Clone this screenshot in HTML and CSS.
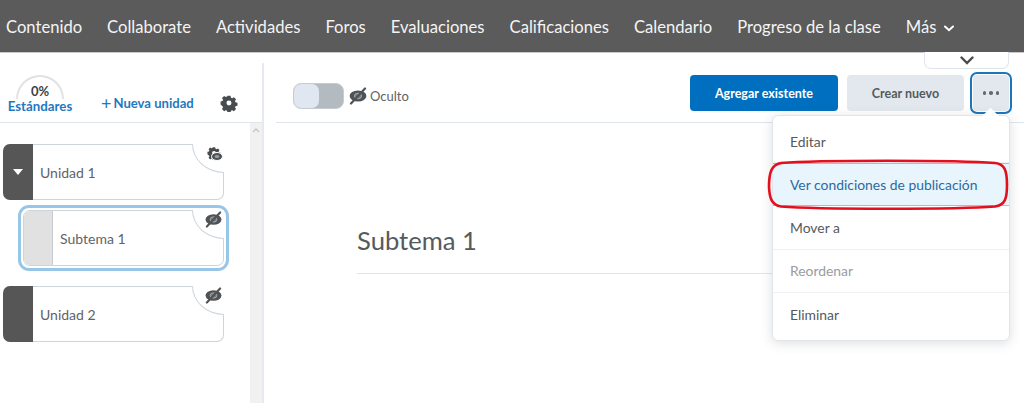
FILE: index.html
```html
<!DOCTYPE html>
<html lang="es">
<head>
    <meta charset="UTF-8">
    <title>Contenido</title>
    <link rel="stylesheet" href="styles.css">
</head>
<body>
    <svg class="defs" width="0" height="0">
        <symbol id="eye-off" viewBox="0 0 18 18">
            <ellipse cx="9" cy="9" rx="8.4" ry="5.6" fill="#4f5355"/>
            <ellipse cx="9" cy="9" rx="3.6" ry="2.8" fill="#77797b" stroke="#b5b7b9" stroke-width=".8"/>
            <path d="M2 16.5 L16 1.5" stroke="#4f5355" stroke-width="2.2" stroke-linecap="round"/>
        </symbol>
        <symbol id="gear" viewBox="0 0 18 18">
            <path fill="#494c4e" fill-rule="evenodd" d="M7.3 0.8h3.4l.5 2.2 1.4.6 1.9-1.2 2.4 2.4-1.2 1.9.6 1.4 2.2.5v3.4l-2.2.5-.6 1.4 1.2 1.9-2.4 2.4-1.9-1.2-1.4.6-.5 2.2H7.3l-.5-2.2-1.4-.6-1.9 1.2-2.4-2.4 1.2-1.9-.6-1.4L-.5 10.7V7.3l2.2-.5.6-1.4L1.1 3.5l2.4-2.4 1.9 1.2 1.4-.6zM9 6.2a2.8 2.8 0 1 0 0 5.6 2.8 2.8 0 0 0 0-5.6z" transform="translate(1 1) scale(.89)"/>
        </symbol>
    </svg>

    <nav class="topnav">
        <a>Contenido</a>
        <a>Collaborate</a>
        <a>Actividades</a>
        <a>Foros</a>
        <a>Evaluaciones</a>
        <a>Calificaciones</a>
        <a>Calendario</a>
        <a>Progreso de la clase</a>
        <a class="more">Más
            <svg width="10" height="7" viewBox="0 0 10 7"><path d="M1 1.5 L5 5.2 L9 1.5" fill="none" stroke="#fff" stroke-width="2" stroke-linecap="round"/></svg>
        </a>
    </nav>

    <div class="layout">
        <aside class="sidebar">
            <div class="side-head">
                <div class="standards">
                    <div class="gauge">0%</div>
                    <div class="standards-label">Estándares</div>
                </div>
                <a class="new-unit"><span class="plus">+</span>Nueva unidad</a>
                <svg class="side-gear" width="18" height="18"><use href="#gear"/></svg>
            </div>
            <div class="side-body">
                <div class="tree">
                    <div class="card">
                        <div class="card-tab">
                            <svg width="10" height="6" viewBox="0 0 10 6"><path d="M0 0H10L5 6Z" fill="#fff"/></svg>
                        </div>
                        <div class="card-name">Unidad 1</div>
                        <div class="notch"></div>
                        <svg class="card-icon card-icon-gear" width="14" height="14"><use href="#gear"/></svg>
                        <svg class="card-icon-sub" width="12" height="9" viewBox="0 0 12 9"><ellipse cx="6" cy="4.5" rx="5.5" ry="4" fill="#4f5355" stroke="#fff" stroke-width="1"/><ellipse cx="6" cy="4.5" rx="2.4" ry="1.6" fill="#9a9c9e"/></svg>
                    </div>
                    <div class="card-focus">
                        <div class="card card-sub">
                            <div class="card-tab tab-light"></div>
                            <div class="card-name">Subtema 1</div>
                            <div class="notch"></div>
                            <svg class="card-icon" width="17" height="17"><use href="#eye-off"/></svg>
                        </div>
                    </div>
                    <div class="card">
                        <div class="card-tab"></div>
                        <div class="card-name">Unidad 2</div>
                        <div class="notch"></div>
                        <svg class="card-icon" width="17" height="17"><use href="#eye-off"/></svg>
                    </div>
                </div>
                <div class="scrollbar">
                    <svg width="8" height="5" viewBox="0 0 8 5"><path d="M1 4 L4 1 L7 4" fill="none" stroke="#c4c4c4" stroke-width="1.4"/></svg>
                </div>
            </div>
        </aside>

        <main class="content">
            <div class="toolbar">
                <div class="visibility">
                    <div class="toggle"><div class="knob"></div></div>
                    <svg width="18" height="18"><use href="#eye-off"/></svg>
                    <span>Oculto</span>
                </div>
                <div class="actions">
                    <button class="btn btn-primary">Agregar existente</button>
                    <button class="btn btn-secondary">Crear nuevo</button>
                    <button class="btn-dots"><i></i><i></i><i></i></button>
                </div>
            </div>
            <h1 class="title">Subtema 1</h1>
        </main>
    </div>

    <div class="collapse-tab">
        <svg width="14" height="9" viewBox="0 0 14 9"><path d="M1.5 1.5 L7 7 L12.5 1.5" fill="none" stroke="#494c4e" stroke-width="2.4" stroke-linecap="round"/></svg>
    </div>

    <div class="menu">
        <div class="menu-arrow"></div>
        <div class="menu-item">Editar</div>
        <div class="menu-item active">Ver condiciones de publicación</div>
        <div class="menu-item">Mover a</div>
        <div class="menu-item disabled">Reordenar</div>
        <div class="menu-item">Eliminar</div>
    </div>

    <svg class="highlight" width="244" height="52" viewBox="0 0 244 52">
        <path d="M14 4 C50 1 190 1 228 4 C238 5 240 12 240 26 C240 40 238 46 228 47.5 C190 50.5 50 50.5 14 47.5 C4 46 2.500 38 2 28 C2 14 4 6 14 4Z" fill="none" stroke="#e2101e" stroke-width="2.6"/>
    </svg>
</body>
</html>
```

FILE: styles.css
```css
*{
    margin: 0;
    padding: 0;
    box-sizing: border-box;
}
body{
    width: 1024px;
    height: 403px;
    overflow: hidden;
    background-color: #fff;
    font-family: 'Lato', sans-serif;
    color: #565a5c;
    position: relative;
}
.defs{
    position: absolute;
}
.topnav{
    height: 53px;
    background-color: #5b5b5b;
    border-bottom: 1px solid #c9c9c9;
    display: flex;
    align-items: center;
    gap: 25px;
    padding: 1px 0 0 6px;
    font-size: 16.6px;
    color: #f4f4f4;
}
.more svg{
    margin-left: 3px;
    vertical-align: 1px;
}
.layout{
    display: flex;
    height: 350px;
}
.sidebar{
    width: 264px;
    padding-top: 10px;
    display: flex;
    flex-direction: column;
    flex-shrink: 0;
}
.side-head{
    height: 60px;
    border-bottom: 1px solid #e0e5ec;
    border-right: 2px solid #e6eaf0;
    display: flex;
    align-items: flex-start;
    padding: 12px 0 0 7px;
}
.standards{
    width: 66px;
    text-align: center;
}
.gauge{
    width: 48px;
    height: 24px;
    margin: 0 auto;
    border: 2px solid #e2e2e2;
    border-bottom: none;
    border-radius: 24px 24px 0 0;
    font-size: 13px;
    font-weight: 700;
    color: #3c3f41;
    padding-top: 8px;
    line-height: 13px;
}
.standards-label{
    font-size: 13.3px;
    font-weight: 700;
    color: #1f78c1;
    line-height: 15px;
}
.new-unit{
    margin: 20px 0 0 28px;
    font-size: 13.1px;
    font-weight: 700;
    color: #1f78c1;
    line-height: 16px;
    display: flex;
    align-items: center;
}
.plus{
    font-size: 18px;
    font-weight: 400;
    margin-right: 2px;
    line-height: 16px;
}
.side-gear{
    margin: 19px 0 0 26px;
}
.side-body{
    flex: 1;
    display: flex;
    border-right: 2px solid #e6eaf0;
}
.tree{
    width: 250px;
    padding: 21px 0 0 3px;
}
.scrollbar{
    width: 12px;
    background-color: #f1f1f1;
    display: flex;
    justify-content: center;
    align-items: flex-start;
    padding-top: 5px;
}
.card{
    width: 221px;
    height: 56px;
    border: 1px solid #cdd5dc;
    border-left: none;
    border-radius: 7px;
    display: flex;
    position: relative;
    background-color: #fff;
    margin-bottom: 5px;
}
.card-tab{
    width: 30px;
    margin: -1px 0;
    background-color: #565656;
    border-radius: 7px 0 0 7px;
    display: flex;
    align-items: center;
    justify-content: center;
}
.card-name{
    font-size: 14px;
    padding: 20px 0 0 7px;
    line-height: 16px;
    color: #5f6366;
}
.notch{
    position: absolute;
    top: -1px;
    right: -1px;
    width: 32px;
    height: 29px;
    background-color: #fff;
    border-left: 1px solid #cdd5dc;
    border-bottom: 1px solid #cdd5dc;
    border-bottom-left-radius: 100%;
}
.card-icon{
    position: absolute;
    top: 0;
    right: 1px;
}
.card-icon-gear{
    top: 1px;
    right: 2px;
}
.card-icon-sub{
    position: absolute;
    top: 7px;
    right: 0;
}
.card-focus{
    width: 211px;
    height: 66px;
    margin: 0 0 15px 15px;
    padding: 2px;
    border: 3px solid #97c6e8;
    border-radius: 11px;
}
.card-sub{
    width: 100%;
    height: 100%;
    border-left: 1px solid #cdd5dc;
    margin: 0;
}
.tab-light{
    width: 29px;
    margin: 0;
    background-color: #e1e1e1;
    border-right: 1px solid #c4cbd3;
    border-radius: 6px 0 0 6px;
}
.content{
    flex: 1;
    padding-left: 12px;
}
.toolbar{
    height: 70px;
    border-bottom: 1px solid #e0e5ec;
    display: flex;
    justify-content: space-between;
    align-items: flex-start;
    padding: 22px 12px 0 17px;
}
.visibility{
    display: flex;
    align-items: center;
    gap: 2px;
    padding-top: 8px;
    font-size: 13px;
    color: #5f6366;
}
.toggle{
    width: 51px;
    height: 26px;
    border-radius: 8px;
    background-color: #b3bac0;
    border: 1px solid #c5cdd4;
    margin-right: 3px;
}
.knob{
    width: 25px;
    height: 24px;
    border-radius: 7px;
    background-color: #e1e7f0;
}
.visibility span{
    margin-left: 1px;
}
.actions{
    display: flex;
    align-items: flex-start;
    gap: 9px;
}
.btn{
    height: 36px;
    border: none;
    border-radius: 4px;
    font-family: 'Lato', sans-serif;
    font-size: 12.5px;
    font-weight: 700;
}
.btn-primary{
    width: 148px;
    background-color: #006fbf;
    color: #fff;
}
.btn-secondary{
    width: 117px;
    background-color: #e3e8ef;
    color: #565a5c;
}
.btn-dots{
    width: 42px;
    height: 42px;
    margin: -3px 0 0 -3px;
    border: 2px solid #1c76bc;
    border-radius: 7px;
    background-color: #e3e8ef;
    box-shadow: inset 0 0 0 1px #fff;
    display: flex;
    align-items: center;
    justify-content: center;
    gap: 3px;
}
.btn-dots i{
    width: 3.5px;
    height: 3.5px;
    border-radius: 50%;
    background-color: #66696b;
}
.title{
    width: 478px;
    margin: 101px 0 0 81px;
    padding-bottom: 17px;
    border-bottom: 1px solid #e0e5ec;
    font-size: 25.6px;
    font-weight: 400;
    line-height: 32px;
    color: #565a5c;
}
.collapse-tab{
    position: absolute;
    top: 52px;
    left: 924px;
    width: 85px;
    height: 17px;
    background-color: #fff;
    border: 1px solid #e0e5ec;
    border-top: none;
    border-radius: 0 0 7px 7px;
    display: flex;
    justify-content: center;
    padding-top: 4px;
}
.menu{
    position: absolute;
    top: 115px;
    left: 772px;
    width: 238px;
    height: 226px;
    padding-top: 4px;
    background-color: #fff;
    border: 1px solid #e0e5ec;
    border-radius: 6px;
    box-shadow: 0 2px 12px rgba(86, 90, 92, 0.2);
    font-size: 13.9px;
    color: #565a5c;
}
.menu-arrow{
    position: absolute;
    top: -6px;
    right: 13px;
    width: 11px;
    height: 11px;
    background-color: #fff;
    transform: rotate(45deg);
}
.menu-item{
    height: 43.2px;
    padding: 0 17px;
    display: flex;
    align-items: center;
    border-bottom: 1px solid #eef0f4;
}
.menu-item:last-child{
    border-bottom: none;
}
.menu-item.active{
    background-color: #e8f5fd;
    color: #2c6a9f;
    border-top: 1px solid #8fc5ea;
    border-bottom: 1px solid #8fc5ea;
}
.menu-item.disabled{
    color: #9a9c9e;
}
.highlight{
    position: absolute;
    top: 159px;
    left: 767px;
}
```
